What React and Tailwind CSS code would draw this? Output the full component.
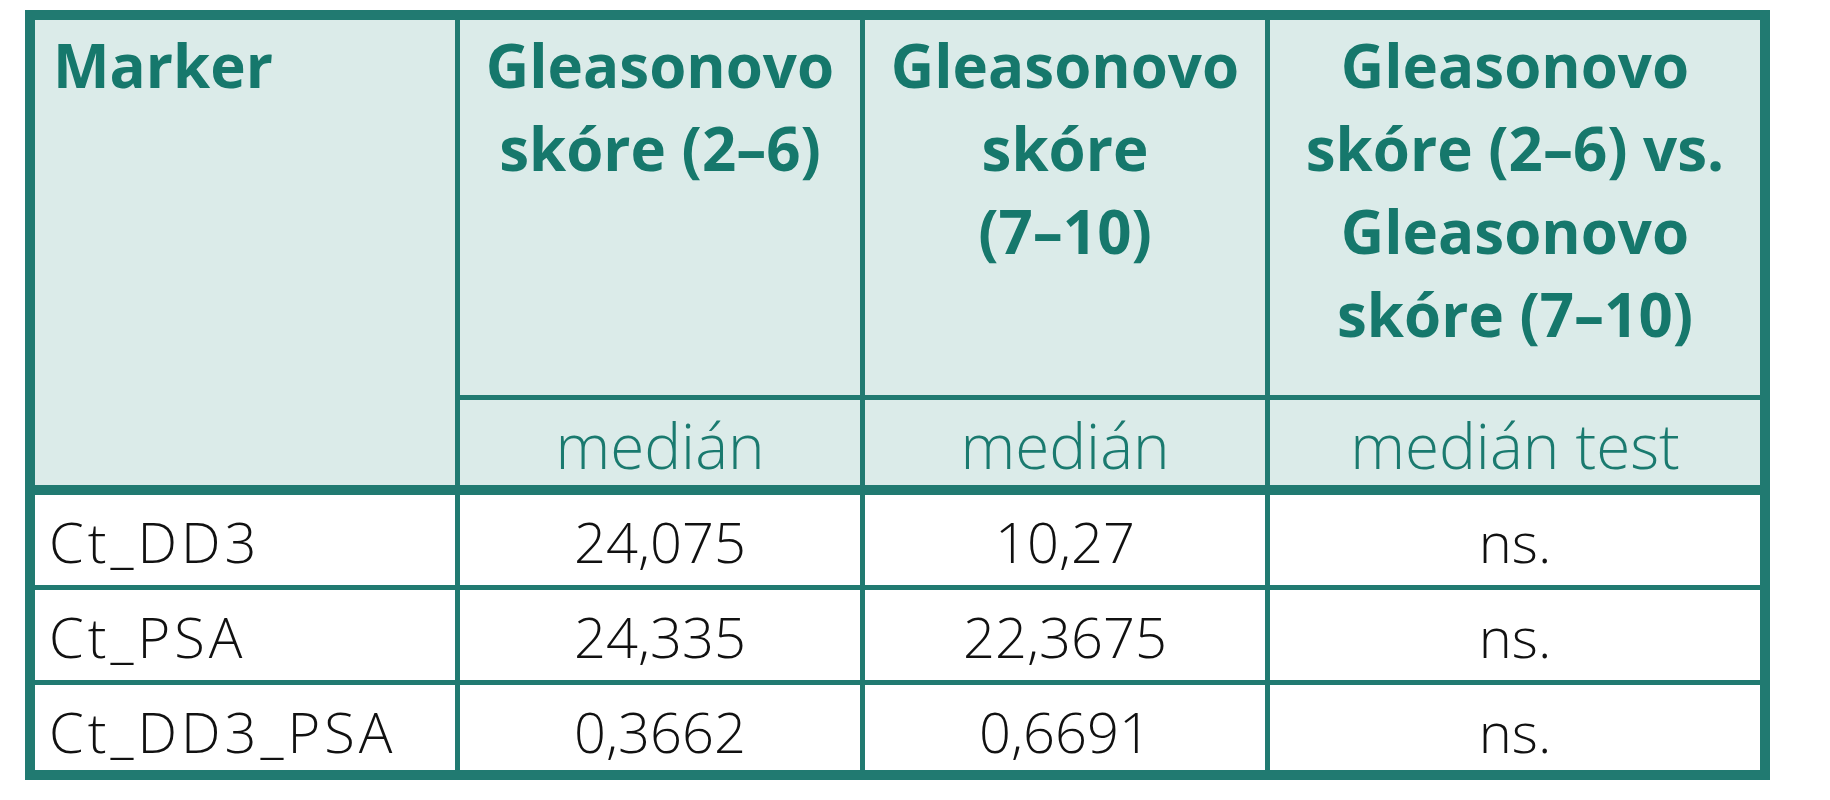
import React from 'react'

const headCols = [
  ['Gleasonovo', 'skóre (2–6)'],
  ['Gleasonovo', 'skóre', '(7–10)'],
  ['Gleasonovo', 'skóre (2–6) vs.', 'Gleasonovo', 'skóre (7–10)'],
]

const subHead = ['medián', 'medián', 'medián test']

const rows = [
  ['Ct_DD3', '24,075', '10,27', 'ns.'],
  ['Ct_PSA', '24,335', '22,3675', 'ns.'],
  ['Ct_DD3_PSA', '0,3662', '0,6691', 'ns.'],
]

const App = () => {
  return (
    <div className="min-h-screen bg-white pl-[25px] pt-[10px] font-['Open_Sans',sans-serif]">
      <div className="flex w-[1745px] flex-col gap-[10px] border-[10px] border-[#217a71] bg-[#217a71]">
        {/* header */}
        <div className="grid grid-cols-[420px_400px_400px_490px] grid-rows-[375px_85px] gap-[5px]">
          <div className="row-span-2 bg-[#dbebe9] pl-[18px] pt-[4px] text-[60px] font-bold leading-[83px] text-[#16786c]">
            Marker
          </div>
          {headCols.map((lines, i) => (
            <div key={i} className="bg-[#dbebe9] pt-[4px] text-center text-[60px] font-bold leading-[83px] text-[#16786c]">
              {lines.map((l, j) => (
                <div key={j} className="whitespace-nowrap">{l}</div>
              ))}
            </div>
          ))}
          {subHead.map((t, i) => (
            <div key={i} className="bg-[#dbebe9] pt-[3px] text-center text-[62px] font-light leading-[85px] text-[#1a7a6f]">
              {t}
            </div>
          ))}
        </div>

        {/* body */}
        <div className="grid grid-cols-[420px_400px_400px_490px] grid-rows-[90px_90px_85px] gap-[5px]">
          {rows.map((r, i) =>
            r.map((c, j) => (
              <div
                key={i + '-' + j}
                className={
                  'bg-white pt-[2px] text-[56px] font-light leading-[88px] text-[#111] ' +
                  (j === 0 ? 'pl-[14px] tracking-[4px]' : 'text-center')
                }
              >
                {c}
              </div>
            ))
          )}
        </div>
      </div>
    </div>
  )
}

export default App
